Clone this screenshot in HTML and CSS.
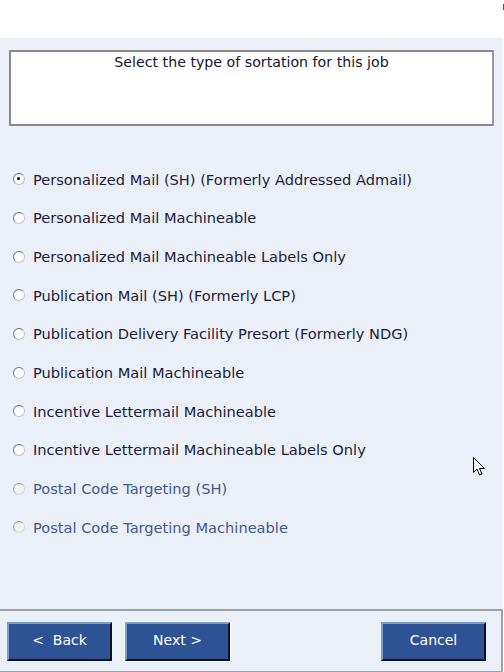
FILE: index.html
```html
<!DOCTYPE html>
<html>
<head>
<meta charset="utf-8">
<link rel="stylesheet" href="styles.css">
</head>
<body>
<div class="window">
  <div class="topbar"><span class="tick"></span></div>
  <div class="main">
    <div class="prompt">Select the type of sortation for this job</div>
    <ul class="options">
      <li class="opt"><span class="radio checked"></span>Personalized Mail (SH) (Formerly Addressed Admail)</li>
      <li class="opt"><span class="radio"></span>Personalized Mail Machineable</li>
      <li class="opt"><span class="radio"></span>Personalized Mail Machineable Labels Only</li>
      <li class="opt"><span class="radio"></span>Publication Mail (SH) (Formerly LCP)</li>
      <li class="opt"><span class="radio"></span>Publication Delivery Facility Presort (Formerly NDG)</li>
      <li class="opt"><span class="radio"></span>Publication Mail Machineable</li>
      <li class="opt"><span class="radio"></span>Incentive Lettermail Machineable</li>
      <li class="opt"><span class="radio"></span>Incentive Lettermail Machineable Labels Only</li>
      <li class="opt disabled"><span class="radio"></span>Postal Code Targeting (SH)</li>
      <li class="opt disabled"><span class="radio"></span>Postal Code Targeting Machineable</li>
    </ul>
  </div>
  <div class="footer">
    <button class="btn">&lt;&nbsp; Back</button>
    <button class="btn default">Next &gt;</button>
    <span class="spacer"></span>
    <button class="btn">Cancel</button>
  </div>
  <svg class="cursor" width="13" height="20" viewBox="0 0 13 20"><path d="M0.5 0.5 L0.5 15.5 L4 12 L6.5 18 L9 17 L6.5 11.5 L11.5 11.5 Z" fill="#fff" stroke="#000" stroke-width="1"/></svg>
</div>
</body>
</html>
```
FILE: styles.css
```css
html, body { margin: 0; padding: 0; background: #fff; }
body { font-family: "DejaVu Sans", Verdana, sans-serif; }
.window { position: relative; width: 504px; height: 672px; overflow: hidden; display: flex; flex-direction: column; }
.topbar { height: 38px; background: #fff; position: relative; }
.tick { position: absolute; right: 0; top: 4px; width: 1px; height: 6px; background: #555; }
.main { height: 571px; width: 503px; background: #ebeff8; padding-top: 12px; box-sizing: border-box; }
.prompt { margin-left: 9px; width: 485px; height: 76px; box-sizing: border-box; border: 2px solid #8a8a8a; border-right-color: #9a9a9a; background: #fff; text-align: center; font-size: 14.2px; color: #14142e; padding-top: 2px; }
.options { list-style: none; margin: 34px 0 0 0; padding: 0; }
.opt { height: 38.67px; display: flex; align-items: center; font-size: 14.6px; color: #1c1c3a; padding-left: 13px; }
.opt.disabled { color: #3f5a8e; }
.radio { width: 12px; height: 12px; border-radius: 50%; box-sizing: border-box; background: #fff; border: 1.5px solid #c4c4c4; border-top-color: #6e6e6e; border-left-color: #7a7a7a; margin-right: 8px; position: relative; flex: none; }
.radio.checked::after { content: ""; position: absolute; left: 3px; top: 3px; width: 3px; height: 3px; border-radius: 50%; background: #000; }
.opt.disabled .radio { border-color: #d6d6d6; border-top-color: #9a9a9a; border-left-color: #a4a4a4; background: #f2f2f2; }
.footer { height: 63px; width: 503px; box-sizing: border-box; background: #ebeff8; border-top: 2px solid #a0a0a4; border-right: 2px solid #a0a0a4; border-bottom: 1px solid #a0a0a4; display: flex; align-items: flex-start; padding: 11px 15px 0 7px; gap: 13px; }
.spacer { flex: 1; }
.btn { width: 105px; height: 39px; background: #2e5394; color: #fff; font-family: "DejaVu Sans", Verdana, sans-serif; font-size: 14px; border: 2px solid; border-color: #7b9bd0 #0c1222 #0c1222 #7b9bd0; padding: 0 0 3px 0; cursor: default; }
.btn.default { outline: 1px solid #fff; outline-offset: 0; }
.cursor { position: absolute; left: 473px; top: 457px; }
```
